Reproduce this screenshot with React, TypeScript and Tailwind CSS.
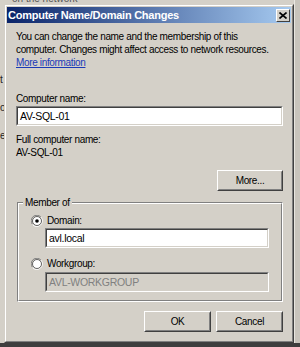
import React from "react";

const font = { fontFamily: '"Liberation Sans", Arial, sans-serif' };

function Sunken({ children, disabled }: { children: React.ReactNode; disabled?: boolean }) {
  return (
    <div className="border border-t-[#808080] border-l-[#808080] border-r-white border-b-white">
      <div
        className={
          "h-[18px] border border-t-[#404040] border-l-[#404040] border-r-[#d4d0c8] border-b-[#d4d0c8] flex items-center pl-[2px] text-[10.5px] leading-[13px] tracking-[-0.3px] " +
          (disabled ? "bg-[#d4d0c8] text-[#808080]" : "bg-white text-black")
        }
      >
        {children}
      </div>
    </div>
  );
}

function Button({ children, w }: { children: React.ReactNode; w: string }) {
  return (
    <div className={"border border-t-white border-l-white border-r-[#404040] border-b-[#404040] h-[21px] " + w}>
      <div className="h-full border border-t-[#d4d0c8] border-l-[#d4d0c8] border-r-[#808080] border-b-[#808080] flex items-center justify-center text-black">
        {children}
      </div>
    </div>
  );
}

function Radio({ checked }: { checked?: boolean }) {
  return (
    <svg width="12" height="12" viewBox="0 0 12 12">
      <path d="M10 2.2 A5.5 5.5 0 0 0 1.5 9.5" stroke="#808080" fill="none" strokeWidth="1" />
      <path d="M1.5 9.5 A5.5 5.5 0 0 0 10 2.2" stroke="#ffffff" fill="none" strokeWidth="1" />
      <circle cx="6" cy="6" r="4.5" fill="#ffffff" stroke="#404040" strokeWidth="0.8" />
      {checked && <circle cx="6" cy="6" r="1.8" fill="#000" />}
    </svg>
  );
}

export default function App() {
  return (
    <div className="w-[300px] h-[347px] bg-[#d4d0c8] relative overflow-hidden" style={font}>
      {/* background window fragments */}
      <div className="absolute left-0 top-0 h-[4px] w-full overflow-hidden">
        <div className="text-[10px] leading-[10px] text-[#555] pl-[12px] -mt-[6px]">on the network</div>
      </div>
      <div className="absolute left-0 top-[66px] text-[10px] text-[#222] leading-[28px] w-[4px] overflow-hidden">
        <div>t</div>
        <div>o</div>
        <div>e</div>
      </div>
      <div className="absolute right-0 top-0 w-[6px] h-full bg-[#c8c4bc] border-l border-[#e8e6e0]" />
      <div className="absolute left-0 bottom-0 w-full h-[4px] bg-[#3e3e3e]" />

      <div className="absolute left-[4px] top-[4px] w-[290px] h-[339px] border border-t-[#d4d0c8] border-l-[#d4d0c8] border-r-[#404040] border-b-[#404040] bg-[#d4d0c8]">
        <div className="h-full border border-t-white border-l-white border-r-[#808080] border-b-[#808080] p-[1px] flex flex-col">
          {/* title bar */}
          <div className="h-[16px] flex items-center justify-between pl-[1px] pr-[1px] bg-[linear-gradient(to_right,#0a246a,#a6caf0)]">
            <span className="text-white font-bold text-[11px] leading-[13px] tracking-[-0.25px]">Computer Name/Domain Changes</span>
            <div className="w-[14px] h-[13px] border border-t-white border-l-white border-r-[#404040] border-b-[#404040] bg-[#d4d0c8] flex items-center justify-center">
              <svg width="8" height="7" viewBox="0 0 8 7">
                <path d="M0.5 0.5 L7.5 6.5 M7.5 0.5 L0.5 6.5" stroke="#000" strokeWidth="1.6" />
              </svg>
            </div>
          </div>

          {/* content */}
          <div className="flex flex-col pl-[9px] pr-[8px] pt-[7px] text-[10px] leading-[13px] tracking-[-0.35px] text-black">
            <div className="whitespace-nowrap">You can change the name and the membership of this</div>
            <div className="whitespace-nowrap">computer. Changes might affect access to network resources.</div>
            <div>
              <span className="text-[#1a3ab8] underline">More information</span>
            </div>

            <div className="mt-[23px]">Computer name:</div>
            <div className="mt-[1px]">
              <Sunken>AV-SQL-01</Sunken>
            </div>

            <div className="mt-[7px]">Full computer name:</div>
            <div>AV-SQL-01</div>

            <div className="mt-[11px] flex justify-end">
              <Button w="w-[66px]">More...</Button>
            </div>

            {/* group box */}
            <div className="relative mt-[11px] ml-[1px] h-[100px] border border-t-[#808080] border-l-[#808080] border-r-white border-b-white">
              <div className="h-full border border-t-white border-l-white border-r-[#808080] border-b-[#808080] pl-[12px] pr-[12px] pt-[10px]">
                <div className="flex items-center gap-[4px] h-[13px]">
                  <Radio checked />
                  <span>Domain:</span>
                </div>
                <div className="ml-[14px] mt-[1px]">
                  <Sunken>avl.local</Sunken>
                </div>
                <div className="flex items-center gap-[4px] h-[13px] mt-[9px]">
                  <Radio />
                  <span>Workgroup:</span>
                </div>
                <div className="ml-[14px] mt-[2px]">
                  <Sunken disabled>AVL-WORKGROUP</Sunken>
                </div>
              </div>
              <span className="absolute left-[5px] top-[-7px] px-[2px] bg-[#d4d0c8]">Member of</span>
            </div>

            <div className="mt-[9px] flex justify-end gap-[5px]">
              <Button w="w-[67px]">OK</Button>
              <Button w="w-[67px]">Cancel</Button>
            </div>
          </div>
        </div>
      </div>
    </div>
  );
}
